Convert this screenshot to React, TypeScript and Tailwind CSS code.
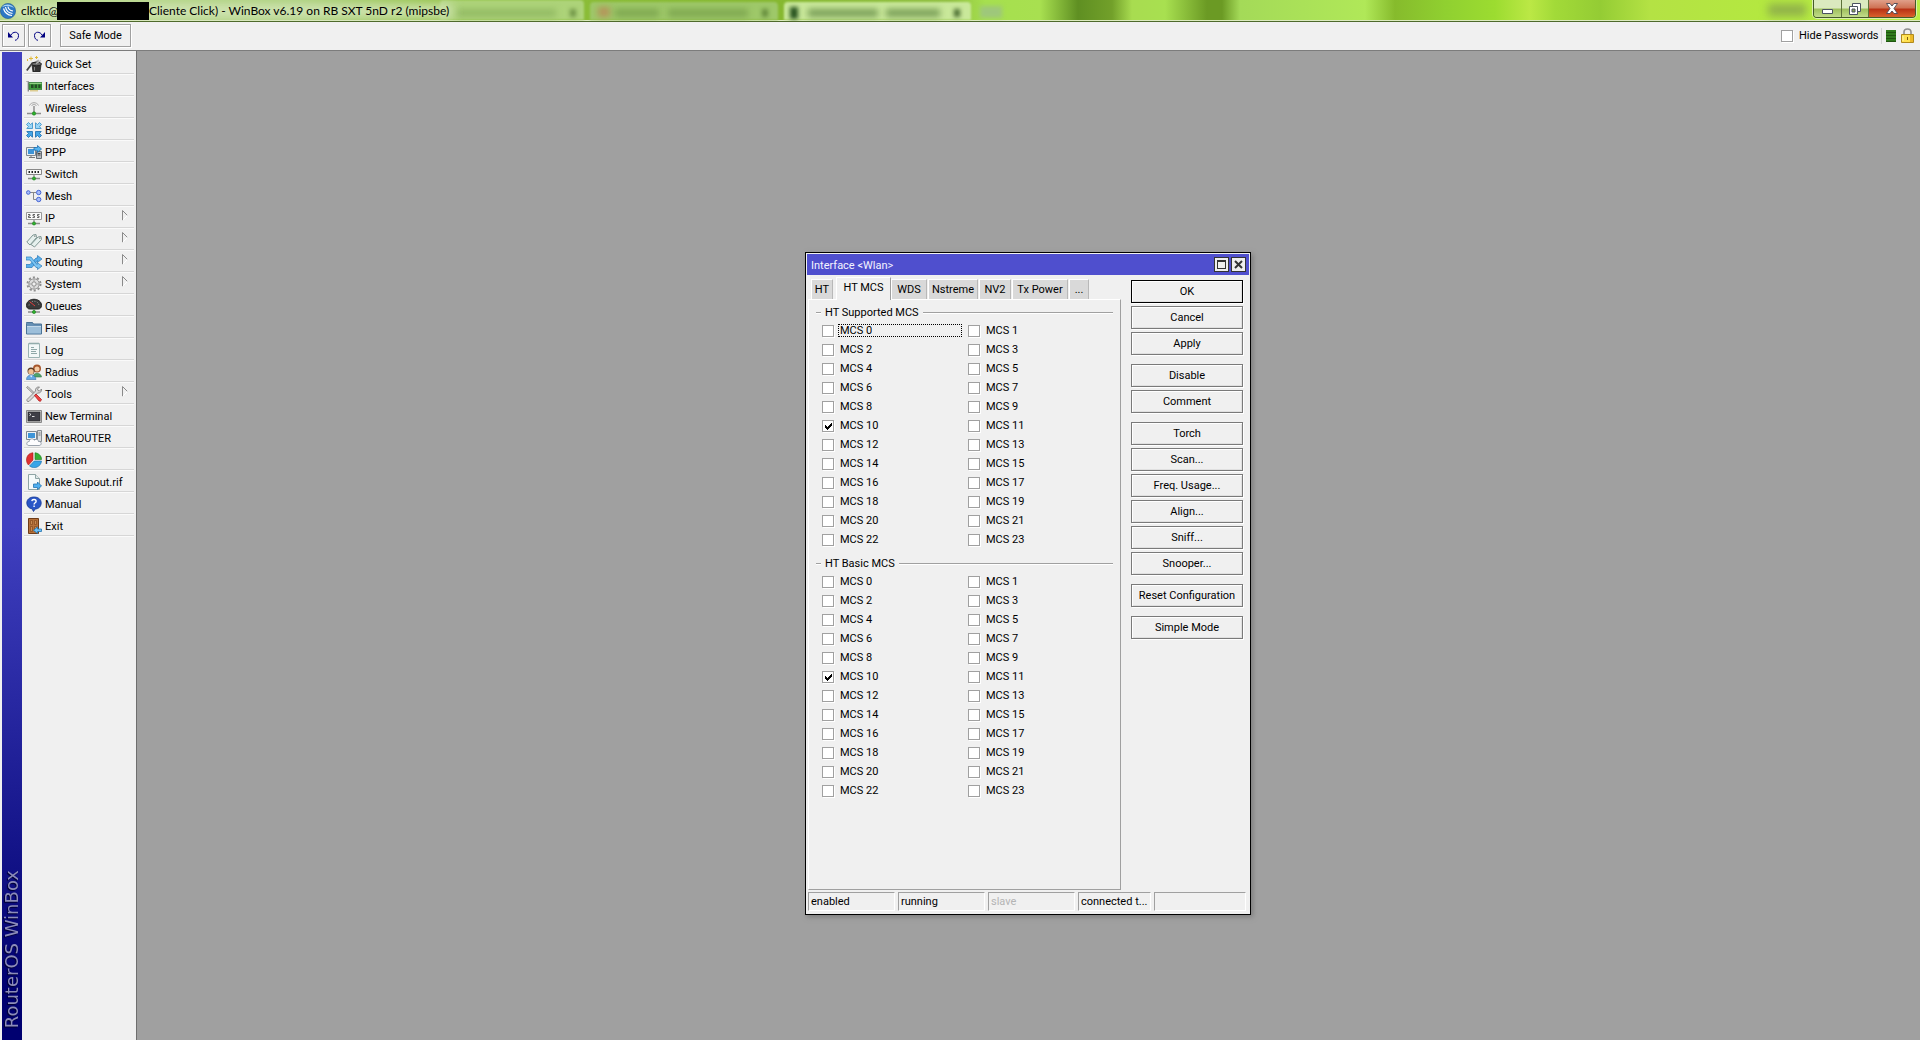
import React, { useState } from "react";

type IconProps = { children: React.ReactNode };

function Icon({ children }: IconProps) {
  return (
    <svg viewBox="0 0 16 16" className="size-4 shrink-0" fill="none" aria-hidden="true">
      {children}
    </svg>
  );
}

const icons: Record<string, React.ReactNode> = {
  "Quick Set": (
    <Icon>
      <path d="M5 .5v4M3 2.500h4M10.500 0v3M9 1.500h3M1.500 3v2" stroke="#e0b93a" />
      <path d="M6.500 8 13 4.500" stroke="#aaa" strokeWidth="2" />
      <path d="M6 8.500h9L14 16H7z" fill="#333" stroke="#222" strokeWidth=".8" />
      <ellipse cx="10.500" cy="8" rx="5" ry="1.800" fill="#6a6a6a" stroke="#222" />
      <path d="M8.500 11v3.500" stroke="#888" />
      <path d="m.8 14.500 6-8" stroke="#444" strokeWidth="1.800" />
      <path d="m10 7.500 5-3" stroke="#bbb" strokeWidth="1.200" />
    </Icon>
  ),
  Interfaces: (
    <Icon>
      <path d="M.5 3.500h2v10" stroke="#8b8b8b" />
      <path d="M1.500 3.500v10" stroke="#c9c9c9" />
      <path d="M3 4.500h13v7H3z" fill="#3f9a3c" stroke="#2c7530" strokeWidth=".7" />
      <path d="M5 6.500h2.500V10H5zM8.700 6.500h2.300V10H8.700zM12.300 6.500h2.200V10h-2.200z" fill="#244b24" />
      <path d="M5 12v1.500M7 12v1.500M9 12v1.500M11 12v1.500" stroke="#c8a834" />
      <path d="M3.500 5.500h12" stroke="#8ed080" />
    </Icon>
  ),
  Wireless: (
    <Icon>
      <path d="M3.500 5.500C5 1.800 11 1.800 12.500 5.500M5.500 6c1-2 4-2 5 0" stroke="#a5a5a5" />
      <path d="M8 6v7" stroke="#777" strokeWidth="1.200" />
      <path d="M1 13.500h14" stroke="#8d8d8d" strokeWidth="1.500" />
      <circle cx="8" cy="13.500" r="1.700" fill="#2db32d" stroke="#168016" strokeWidth=".6" />
    </Icon>
  ),
  Bridge: (
    <Icon>
      <path d="M.5 2.500l2-2 2 2L6.500.8v5.700H.8l1.700-2z" fill="#9bd6f7" stroke="#348dc5" strokeWidth=".8" />
      <path d="M15.500 2.500l-2-2-2 2L9.500.8v5.700h5.700l-1.700-2z" fill="#9bd6f7" stroke="#348dc5" strokeWidth=".8" />
      <path d="M.5 13.500l2 2 2-2 2 1.700V9.500H.8l1.700 2z" fill="#45a5e6" stroke="#1669ab" strokeWidth=".8" />
      <path d="M15.500 13.500l-2 2-2-2-2 1.700V9.500h5.700l-1.700 2z" fill="#45a5e6" stroke="#1669ab" strokeWidth=".8" />
    </Icon>
  ),
  PPP: (
    <Icon>
      <path d="M.5 3.500h9v8h-9z" fill="#e8edf2" stroke="#7e8790" />
      <path d="M2 5h6v5H2z" fill="#3d94d8" />
      <path d="M3 13.500h6M5 12v1" stroke="#777" />
      <path d="M10.500 7.500h5v7h-5z" fill="#b8bdc3" stroke="#656c74" />
      <path d="M11.500 9.500h3M11.500 11h3" stroke="#444" />
      <path d="M8 6V3.500h3.500V1.500L15.500 5l-4 3.500V6.500z" fill="#55b4f0" stroke="#1c6cac" strokeWidth=".8" />
    </Icon>
  ),
  Switch: (
    <Icon>
      <path d="M.5 3.500h15v5H.5z" fill="#f8f8f8" stroke="#888" />
      <path d="M2.500 6h1.500M5.500 6H7M8.500 6H10M11.500 6H13" stroke="#222" strokeWidth="1.800" />
      <path d="M8 9v3" stroke="#777" />
      <path d="M2 12.500h12" stroke="#8d8d8d" strokeWidth="1.500" />
      <circle cx="8" cy="12.500" r="1.600" fill="#2db32d" stroke="#168016" strokeWidth=".6" />
    </Icon>
  ),
  Mesh: (
    <Icon>
      <path d="M4 4.500h6M7.500 4.500v7H10" stroke="#888" />
      <circle cx="2.300" cy="4.500" r="1.800" fill="#a9bdfa" stroke="#4565d4" />
      <circle cx="12.700" cy="4.500" r="2.200" fill="#a9bdfa" stroke="#4565d4" />
      <circle cx="12.700" cy="11.500" r="2.200" fill="#a9bdfa" stroke="#4565d4" />
    </Icon>
  ),
  IP: (
    <Icon>
      <path d="M.5 2.500h15v7H.5z" fill="#fafafa" stroke="#999" />
      <path
        d="M2 4.500h2V6H2.500v1.500H5M9 4.500H7V6h1.500v1.500H6.500M13.500 4.500h-2V6H13v1.500h-2"
        stroke="#555"
        strokeWidth=".9"
      />
      <path d="M8 10v3" stroke="#777" />
      <path d="M2 13.500h12" stroke="#8d8d8d" strokeWidth="1.500" />
      <circle cx="8" cy="13.500" r="1.600" fill="#2db32d" stroke="#168016" strokeWidth=".6" />
    </Icon>
  ),
  MPLS: (
    <Icon>
      <path d="M.8 10 7 3l3-.5.5 3L4 13z" fill="#e6f0ee" stroke="#7f9693" />
      <path d="M5 12.500 12 5l3-.5.5 3L8.500 15z" fill="#e6f0ee" stroke="#7f9693" />
      <circle cx="8.800" cy="4.200" r=".6" fill="#666" />
      <circle cx="13.800" cy="6.200" r=".6" fill="#666" />
    </Icon>
  ),
  Routing: (
    <Icon>
      <path d="M0 10.500h4L10 4h1.500V1.500L16 5l-4.500 3.500V6.500L6 13.500H0z" fill="#59aeea" stroke="#2878b8" strokeWidth=".7" />
      <path d="M0 3h5l6 7.500V8.500L16 12l-4.500 3.500v-2H10L4 6H0z" fill="#7cc5f3" stroke="#2878b8" strokeWidth=".7" />
    </Icon>
  ),
  System: (
    <Icon>
      <circle cx="8" cy="8" r="6.500" stroke="#8e8e8e" strokeWidth="2" strokeDasharray="2.100 2" />
      <circle cx="8" cy="8" r="5.200" fill="#dedede" stroke="#9a9a9a" />
      <circle cx="8" cy="8" r="2.200" fill="#efefef" stroke="#8a8a8a" />
      <path d="M8 3v2.500M8 10.500V13M3 8h2.500M10.500 8H13" stroke="#a2a2a2" />
    </Icon>
  ),
  Queues: (
    <Icon>
      <path d="M.5 7.500C.5-.8 15.500-.8 15.500 7.500 15.500 9.500 14 11 12.500 11h-9C2 11 .5 9.500.5 7.500z" fill="#3a3a3a" stroke="#222" />
      <path d="M3 7.500C3.500 1.800 12.500 1.800 13 7.500" stroke="#999" strokeDasharray="1 1.500" />
      <path d="m3.500 3.500 5.500 4.500" stroke="#e03a3a" />
      <path d="M8 11v2" stroke="#777" />
      <path d="M2 14h12" stroke="#8d8d8d" strokeWidth="1.500" />
      <circle cx="8" cy="14" r="1.600" fill="#2db32d" stroke="#168016" strokeWidth=".6" />
    </Icon>
  ),
  Files: (
    <Icon>
      <path d="M.5 3.500v-1h6l1 1.500h8v10H.5z" fill="#6690b5" stroke="#4b7396" />
      <path d="M1 6h14v7.500H1z" fill="#9dbfda" />
      <path d="M1 6.500h14" stroke="#c3d9ea" />
    </Icon>
  ),
  Log: (
    <Icon>
      <path d="M2.500 1.500h11v14h-11z" fill="#f2f8f8" stroke="#9ab3b3" />
      <path d="M4 .5v2M6 .5v2M8 .5v2M10 .5v2M12 .5v2" stroke="#8aa5a5" />
      <path d="M5 5.500h3M5 7.500h6M5 9.500h5M5 11.500h6" stroke="#8fa8a8" />
    </Icon>
  ),
  Radius: (
    <Icon>
      <circle cx="11" cy="4.500" r="4" fill="#a7572d" />
      <circle cx="11" cy="5" r="2.500" fill="#f4cba4" />
      <path d="M7 13c0-5 8-5 8.500 0z" fill="#4fa36b" stroke="#32754a" strokeWidth=".6" />
      <circle cx="5" cy="7" r="3.500" fill="#5b3a25" />
      <circle cx="5" cy="7.800" r="2.700" fill="#f1c092" />
      <path d="M.5 15.500c0-6 9-6 9.500 0z" fill="#66a8e4" stroke="#3670ab" strokeWidth=".6" />
      <path d="m4 11.500 1.200 2 1.200-2z" fill="#fff" />
    </Icon>
  ),
  Tools: (
    <Icon>
      <path d="m1 1 1-.5 7 7-1 1-7.500-7z" fill="#ccc" stroke="#777" strokeWidth=".7" />
      <path
        d="m1 13.500 8.500-8.500C9 2.500 11 .5 13.500 1L11.500 3l.5 1.500 1.500.5 2-2c.5 2.500-1.500 4.500-4 4L3 15.500C1.500 16 .5 15 1 13.500z"
        fill="#d8d8d8"
        stroke="#777"
        strokeWidth=".8"
      />
      <path d="m8.500 9.500 1.500-1.500 5.500 5.500-1 1.800-1.500-.3z" fill="#e44" stroke="#a11" strokeWidth=".7" />
    </Icon>
  ),
  "New Terminal": (
    <Icon>
      <path d="M.5 2.500h15v12H.5z" fill="#c6c6c6" stroke="#888" />
      <path d="M2 4h12v9H2z" fill="#3e3e46" stroke="#222" strokeWidth=".5" />
      <path d="m3.500 5.500 1.500 1-1.500 1M6 8.500h2.500" stroke="#eee" strokeWidth=".9" />
    </Icon>
  ),
  MetaROUTER: (
    <Icon>
      <path d="M11.500.5h4v11h-4z" fill="#d9dde0" stroke="#858c92" />
      <path d="M12.500 3h2M12.500 5h2" stroke="#777" />
      <path d="M.5 1.500h10v8H.5z" fill="#eef2f5" stroke="#7e8790" />
      <path d="M2 3h7v5H2z" fill="#3d94d8" />
      <path
        d="M3 15.500c-3 0-3-4 .2-4 .3-3 4-3.500 5-1.300 2-1.700 4.300-.5 4.300 1.300 3.500-.3 3.500 4 .5 4z"
        fill="#fdfdff"
        stroke="#8f99a5"
        strokeWidth=".9"
      />
    </Icon>
  ),
  Partition: (
    <Icon>
      <path d="M7 8V.8C3 1 .5 4 .5 8c0 2 .8 3.800 2 5z" fill="#e03030" stroke="#a51818" strokeWidth=".6" />
      <path d="M9 7.500V.8c3.500.2 6.500 3 6.600 6.700z" fill="#35b035" stroke="#1b7a1b" strokeWidth=".6" />
      <path d="M8.300 9h7.200c-.5 6-7.500 8.500-12 5z" fill="#38a5e8" stroke="#1b6ca8" strokeWidth=".6" />
    </Icon>
  ),
  "Make Supout.rif": (
    <Icon>
      <path d="M2.500.5h7l4 4v11h-11z" fill="#f5fafa" stroke="#8fa5a5" />
      <path d="M9.500.5v4h4" fill="#dfe8e8" stroke="#8fa5a5" />
      <path d="M7.500 10h4V8l4 4-4 3.500v-2h-4z" fill="#4fb0f0" stroke="#2273b0" strokeWidth=".8" />
    </Icon>
  ),
  Manual: (
    <Icon>
      <path
        d="M8 1c4.500 0 7.200 2.500 7.200 6s-2.700 6-6 6L7.500 15.500 6 12.800C3 12.500.8 10 .8 7 .8 3.500 3.500 1 8 1z"
        fill="#2a56c6"
        stroke="#163a94"
        strokeWidth=".8"
      />
      <path d="M5.800 5.200c.3-2.400 4.400-2.200 4.300.2 0 1.400-2 1.400-2 3M8.100 9.500v1.500" stroke="#fff" strokeWidth="1.400" />
    </Icon>
  ),
  Exit: (
    <Icon>
      <path d="M2.500.5h10v15h-10z" fill="#b5703a" stroke="#6f3c17" />
      <path d="M4.500 2.500h2v4h-2zM8.500 2.500h2v4h-2zM4.500 8.500h2v5h-2zM8.500 8.500h2v5h-2z" fill="#c98a52" stroke="#84491d" strokeWidth=".7" />
      <path d="M15.500 11h-4V9l-4 3.300 4 3.200v-2h4z" fill="#6fc0f5" stroke="#2273b0" strokeWidth=".8" />
    </Icon>
  ),
};

const submenus = ["IP", "MPLS", "Routing", "System", "Tools"];

type CheckProps = { id: string; label: string; defaultChecked?: boolean; focused?: boolean };

function Check({ id, label, defaultChecked, focused }: CheckProps) {
  return (
    <div className="flex h-[19px] items-center gap-1">
      <span className="grid shrink-0">
        <input
          id={id}
          type="checkbox"
          defaultChecked={defaultChecked}
          className="peer col-start-1 row-start-1 size-3 appearance-none border border-[#a0a0a0] bg-white shadow-[1px_1px_0_#fff] outline-none"
        />
        <svg
          viewBox="0 0 12 12"
          className="pointer-events-none col-start-1 row-start-1 hidden size-3 peer-checked:block"
          shapeRendering="crispEdges"
          aria-hidden="true"
        >
          <path d="M3 5h1v1h1v1h1V6h1V5h1V4h1V3h1v3H9v1H8v1H7v1H6v1H5V9H4V8H3z" fill="#000" />
        </svg>
      </span>
      <label
        htmlFor={id}
        className={
          focused
            ? "h-[13px] min-w-0 flex-1 border border-dotted border-black pl-px leading-[11px]"
            : "min-w-0 flex-1 pl-[2px] leading-[13px]"
        }
      >
        {label}
      </label>
    </div>
  );
}

function McsGroup({ title, prefix, focusFirst }: { title: string; prefix: string; focusFirst?: boolean }) {
  return (
    <fieldset className="min-w-0 pr-[7px] pl-[7px]">
      <legend className="flex h-[18px] w-full items-center gap-1">
        <span className="h-px w-[5px] bg-[#a0a0a0] shadow-[0_1px_0_#fff]" />
        {title}
        <span className="h-px flex-1 bg-[#a0a0a0] shadow-[0_1px_0_#fff]" />
      </legend>
      <div className="grid grid-cols-[140px_1fr] gap-x-1.5 pl-1.5">
        {Array.from({ length: 24 }, (_, n) => (
          <Check
            key={n}
            id={`${prefix}-${n}`}
            label={`MCS ${n}`}
            defaultChecked={n === 10}
            focused={focusFirst && n === 0}
          />
        ))}
      </div>
    </fieldset>
  );
}

const tabs = [
  { name: "HT", width: "w-[22px]" },
  { name: "HT MCS", width: "w-[55px]" },
  { name: "WDS", width: "w-9" },
  { name: "Nstreme", width: "w-[50px]" },
  { name: "NV2", width: "w-8" },
  { name: "Tx Power", width: "w-14" },
  { name: "...", width: "w-5" },
];

const actionGroups = [
  ["OK", "Cancel", "Apply"],
  ["Disable", "Comment"],
  ["Torch", "Scan...", "Freq. Usage...", "Align...", "Sniff...", "Snooper..."],
  ["Reset Configuration"],
  ["Simple Mode"],
];

const statuses = [
  { text: "enabled", width: "w-[87px]" },
  { text: "running", width: "w-[87px]" },
  { text: "slave", width: "w-[87px] text-[#b4b4b4]" },
  { text: "connected t...", width: "w-[73px]" },
  { text: "", width: "flex-1" },
];

function InterfaceWindow() {
  const [active, setActive] = useState("HT MCS");
  return (
    <section
      aria-label="Interface <Wlan>"
      className="absolute top-[201px] left-[668px] flex h-[663px] w-[446px] flex-col border border-black bg-[#f0f0f0] shadow-[2px_2px_5px_#7c7c7c]"
    >
      <header className="mx-px mt-px flex h-[21px] shrink-0 items-center gap-[2px] bg-[#4f4fce] pr-[3px] pl-1 text-[#f4f4ff]">
        <h1 className="flex-1 pt-[2px]">Interface &lt;Wlan&gt;</h1>
        <button aria-label="Maximize" className="grid size-[15px] place-items-center border border-[#333] bg-[#eee]">
          <svg viewBox="0 0 9 9" className="size-[9px]" shapeRendering="crispEdges">
            <path d="M0 0h9v9H0zM1 2v6h7V2z" fill="#333" fillRule="evenodd" />
          </svg>
        </button>
        <button aria-label="Close" className="grid size-[15px] place-items-center border border-[#333] bg-[#eee]">
          <svg viewBox="0 0 9 9" className="size-[9px]">
            <path d="m1 1 7 7M8 1 1 8" stroke="#333" strokeWidth="2" />
          </svg>
        </button>
      </header>

      <div className="flex min-h-0 flex-1 gap-[10px] pt-[2px] pr-[7px] pl-[2px]">
        <div className="flex w-[313px] flex-col">
          <div role="tablist" className="flex h-[22px] shrink-0 items-end pl-[3px]">
            {tabs.map((t) => {
              const on = t.name === active;
              return (
                <button
                  key={t.name}
                  role="tab"
                  aria-selected={on}
                  onClick={() => setActive(t.name)}
                  className={`${t.width} ${
                    on
                      ? "z-10 -mb-px ml-[2px] h-[23px] border-r border-[#a0a0a0] bg-[#f0f0f0] pb-1"
                      : "mr-px h-5 border-r border-[#b8b8b8] bg-[#d9d9d9]"
                  } shrink-0 border-t border-l border-t-white border-l-white whitespace-nowrap`}
                >
                  {t.name}
                </button>
              );
            })}
          </div>
          <div
            role="tabpanel"
            className="flex flex-1 flex-col gap-[5px] border border-t-white border-r-[#a0a0a0] border-b-[#a0a0a0] border-l-white pt-[3px]"
          >
            <McsGroup title="HT Supported MCS" prefix="supported" focusFirst />
            <McsGroup title="HT Basic MCS" prefix="basic" />
          </div>
        </div>

        <div className="flex flex-1 flex-col gap-[9px] pt-[3px]">
          {actionGroups.map((group) => (
            <div key={group[0]} className="flex flex-col gap-[3px]">
              {group.map((name) => (
                <button
                  key={name}
                  className={`${
                    name === "OK" ? "border-black" : "border-[#7a7a7a]"
                  } h-[23px] border bg-[#f0f0f0] shadow-[1px_1px_0_#fff,inset_1px_1px_0_#fff,inset_-1px_-1px_0_#e0e0e0]`}
                >
                  {name}
                </button>
              ))}
            </div>
          ))}
        </div>
      </div>

      <footer className="flex shrink-0 gap-[3px] pt-[2px] pr-1 pb-[3px] pl-[2px]">
        {statuses.map((s, i) => (
          <div
            key={i}
            className={`${s.width} h-[19px] border border-t-[#a0a0a0] border-r-white border-b-white border-l-[#a0a0a0] pl-[2px] leading-[18px] whitespace-nowrap`}
          >
            {s.text}
          </div>
        ))}
      </footer>
    </section>
  );
}

function TitleBar() {
  return (
    <header className="relative flex h-[22px] shrink-0 items-center overflow-hidden border-b border-[#4f6a2c] bg-[linear-gradient(90deg,#b9d88c_0px,#a9cf78_300px,#8ebf3c_450px,#86b830_780px,#8fbf3f_950px,#a6e04e_985px,#a8e050_1040px,#5f8f22_1078px,#72a02a_1112px,#a8dc50_1132px,#a8e050_1165px,#6b9a24_1207px,#6b9a24_1222px,#a4da58_1240px,#b0e858_1365px,#86bb2c_1395px,#90d030_1445px,#9cdc30_1495px,#bbe845_1530px,#a2da38_1555px,#94cc34_1600px,#b4e244_1650px,#b4e840_1760px,#b9ee45_1920px)] font-[Lato,'Open_Sans',sans-serif] text-[12px] leading-4 text-black shadow-[inset_0_-1px_0_#dcebc0]">
      <div aria-hidden="true" className="absolute inset-0">
        <div className="absolute top-0 left-[440px] h-5 w-[144px] rounded-t bg-[#add379] blur-[1px]" />
        <div className="absolute top-[2px] left-[590px] h-[18px] w-[188px] rounded-t bg-[#9ec869] blur-[1px]" />
        <div className="absolute top-[2px] left-[784px] h-[18px] w-[187px] rounded-t bg-[#c9e89a] blur-[1px]" />
        <div className="absolute top-[9px] left-[456px] h-2 w-[100px] bg-[#93bb64] blur-[3px]" />
        <div className="absolute top-[9px] left-[570px] h-2 w-1.5 bg-[#6f9446] blur-[2px]" />
        <div className="absolute top-[7px] left-[598px] h-2.5 w-3 bg-[#b5935a] blur-[3px]" />
        <div className="absolute top-[9px] left-[615px] h-2 w-[44px] bg-[#7fa850] blur-[3px]" />
        <div className="absolute top-[9px] left-[668px] h-2 w-[80px] bg-[#7fa850] blur-[3px]" />
        <div className="absolute top-[9px] left-[762px] h-2 w-1.5 bg-[#648a3c] blur-[2px]" />
        <div className="absolute top-[7px] left-[790px] h-3 w-2 bg-[#28531f] blur-[2px]" />
        <div className="absolute top-[9px] left-[808px] h-2 w-[70px] bg-[#7a9f58] blur-[3px]" />
        <div className="absolute top-[9px] left-[886px] h-2 w-[54px] bg-[#7a9f58] blur-[3px]" />
        <div className="absolute top-[9px] left-[954px] h-2 w-1.5 bg-[#486a2e] blur-[2px]" />
        <div className="absolute top-[6px] left-[980px] h-3 w-[22px] bg-[#9ec77b] blur-[2px]" />
        <div className="absolute top-[4px] left-[1768px] h-3 w-[38px] bg-[#8fb04a] blur-[4px]" />
        <div className="absolute top-1 left-3 h-3.5 w-[440px] bg-[#d3e5b8] blur-[6px]" />
      </div>
      <svg viewBox="0 0 16 16" className="relative size-4" aria-hidden="true">
        <circle cx="8" cy="8" r="7.600" fill="#2d78c4" stroke="#1d5594" strokeWidth=".6" />
        <path d="M2 4C5 0 12 1 14 5 9 2 5 3 2 4z" fill="#a9d2f2" />
        <path d="M3.500 5.500c1 3.500 4 6.500 8.500 7M5.500 4c.5 3 3 6 7 6.500M8 3.500c.2 2 2 4 5 4.500" stroke="#fff" strokeWidth="1.200" fill="none" />
      </svg>
      <div className="relative flex items-center pl-[5px] whitespace-nowrap">
        <span className="w-9">clktlc@</span>
        <span className="h-[18px] w-[92px] bg-black" />
        <span>Cliente Click) - WinBox v6.19 on RB SXT 5nD r2 (mipsbe)</span>
      </div>
      <div className="relative mr-1 ml-auto flex h-[18px] self-start overflow-hidden rounded-b-[4px] border border-t-0 border-[#455a2a] shadow-[0_0_0_1px_#dcf0b0]">
        <button aria-label="Minimize" className="grid w-[28px] place-items-center border-r border-[#5d723a] bg-[linear-gradient(#dbe9bf_45%,#9fc05e_55%,#c2dc8a)]">
          <svg viewBox="0 0 13 12" className="h-3 w-[13px]">
            <path d="M1.500 6.500h10v4h-10z" fill="#fff" stroke="#4a5260" />
          </svg>
        </button>
        <button aria-label="Restore" className="grid w-[27px] place-items-center border-r border-[#5d723a] bg-[linear-gradient(#dbe9bf_45%,#9fc05e_55%,#c2dc8a)]">
          <svg viewBox="0 0 12 12" className="size-3">
            <path d="M3.500.5h8v8h-8z" fill="#fff" stroke="#4a5260" />
            <path d="M.5 3.500h8v8h-8z" fill="#fff" stroke="#4a5260" />
            <path d="M3 6h3v3H3z" fill="#8aa556" stroke="#4a5260" />
          </svg>
        </button>
        <button aria-label="Close" className="grid w-[46px] place-items-center bg-[linear-gradient(#e0a08a_0%,#cf7355_45%,#b93316_55%,#d9622c)]">
          <svg viewBox="0 0 12 11" className="h-[11px] w-3">
            <path d="M.5.5h3.500L6 3 8 .5h3.500L8 5.500l3.500 5H8L6 8l-2 2.500H.5l3.500-5z" fill="#fff" stroke="#4a4652" strokeWidth=".9" />
          </svg>
        </button>
      </div>
    </header>
  );
}

const toolButton =
  "grid h-[23px] place-items-center border border-[#a0a0a0] bg-[#f0f0f0] shadow-[1px_1px_0_#fff,inset_1px_1px_0_#fff]";

function Toolbar() {
  return (
    <div className="flex h-[29px] shrink-0 items-center border-b border-[#7c7c7c] bg-[#f0f0f0] pr-1.5 pb-px pl-[2px]">
      <button aria-label="Undo" className={`${toolButton} w-[23px]`}>
        <svg viewBox="0 0 11 10" className="h-2.5 w-[11px]">
          <path d="M3 4C4.500.5 10.500 0 10.500 4.500 10.500 7.500 9 9 7 9.300" stroke="#000080" fill="none" />
          <path d="M0 1v5.500h5z" fill="#000080" />
        </svg>
      </button>
      <button aria-label="Redo" className={`${toolButton} ml-[3px] w-[23px]`}>
        <svg viewBox="0 0 11 10" className="h-2.5 w-[11px]">
          <path d="M8 4C6.500.5.5 0 .5 4.500.5 7.500 2 9 4 9.300" stroke="#000080" fill="none" />
          <path d="M11 1v5.500H6z" fill="#000080" />
        </svg>
      </button>
      <button className={`${toolButton} ml-[9px] w-[71px]`}>Safe Mode</button>
      <div className="ml-auto flex items-center gap-1.5">
        <input
          id="hide-passwords"
          type="checkbox"
          className="size-3 appearance-none border border-[#a0a0a0] bg-white shadow-[1px_1px_0_#fff]"
        />
        <label htmlFor="hide-passwords" className="w-[76px] whitespace-nowrap">Hide Passwords</label>
      </div>
      <div className="ml-1.5 h-4 w-px bg-[#d4d4d4]" />
      <div className="ml-1 h-3 w-2.5 bg-[repeating-linear-gradient(#2f7a1c_0_2px,#20560f_2px_3px)]" />
      <svg viewBox="0 0 13 15" className="ml-[5px] h-[15px] w-[13px]" role="img" aria-label="Secure connection">
        <path d="M3 7V4c0-4 7-4 7 0v3" fill="none" stroke="#8e8e8e" strokeWidth="1.600" />
        <path d="M.5 6.500h12v8H.5z" fill="#ffe14f" stroke="#b08a1c" />
        <path d="M9 7h3v7H9z" fill="#edb92a" />
        <path d="M2 8v5" stroke="#fff6b0" />
        <path d="M6 9h1v3H6z" fill="#7d5e0e" />
      </svg>
    </div>
  );
}

export default function App() {
  return (
    <div className="flex h-screen flex-col overflow-hidden bg-[#f0f0f0] font-[Roboto,'Liberation_Sans',sans-serif] text-[11px] leading-[13px] text-black">
      <TitleBar />
      <Toolbar />
      <div className="flex min-h-0 flex-1">
        <aside className="flex w-[137px] shrink-0 border-r border-[#6e6e6e] pt-px pl-[2px]">
          <div className="flex w-5 items-end justify-center bg-[linear-gradient(#4040c0_0%,#4040c0_48%,#000070_95%)] pb-3">
            <span className="rotate-180 font-['DejaVu_Sans',sans-serif] text-[18px] leading-5 whitespace-nowrap text-[#8c8cba] [text-shadow:-1px_-1px_1px_#000030] [writing-mode:vertical-rl]">
              RouterOS WinBox
            </span>
          </div>
          <nav className="flex flex-1 flex-col pr-[2px] pl-[2px]">
            {Object.keys(icons).map((name) => (
              <a
                key={name}
                href="#"
                className="flex h-[22px] items-center border-b border-[#d6d6d6] pt-[3px] pl-[2px] shadow-[0_1px_0_#fafafa]"
              >
                {icons[name]}
                <span className="flex-1 pl-[3px] whitespace-nowrap">{name}</span>
                {submenus.includes(name) && (
                  <svg viewBox="0 0 6 11" className="mr-1.5 mb-1.5 h-[11px] w-1.5" aria-hidden="true">
                    <path d="M.5 10.500V.5l5 5" stroke="#8a8a8a" fill="none" />
                    <path d="m5.500 5.500-5 5" stroke="#fff" />
                  </svg>
                )}
              </a>
            ))}
          </nav>
        </aside>
        <main className="relative min-w-0 flex-1 overflow-hidden bg-[#a0a0a0]">
          <InterfaceWindow />
        </main>
      </div>
    </div>
  );
}
